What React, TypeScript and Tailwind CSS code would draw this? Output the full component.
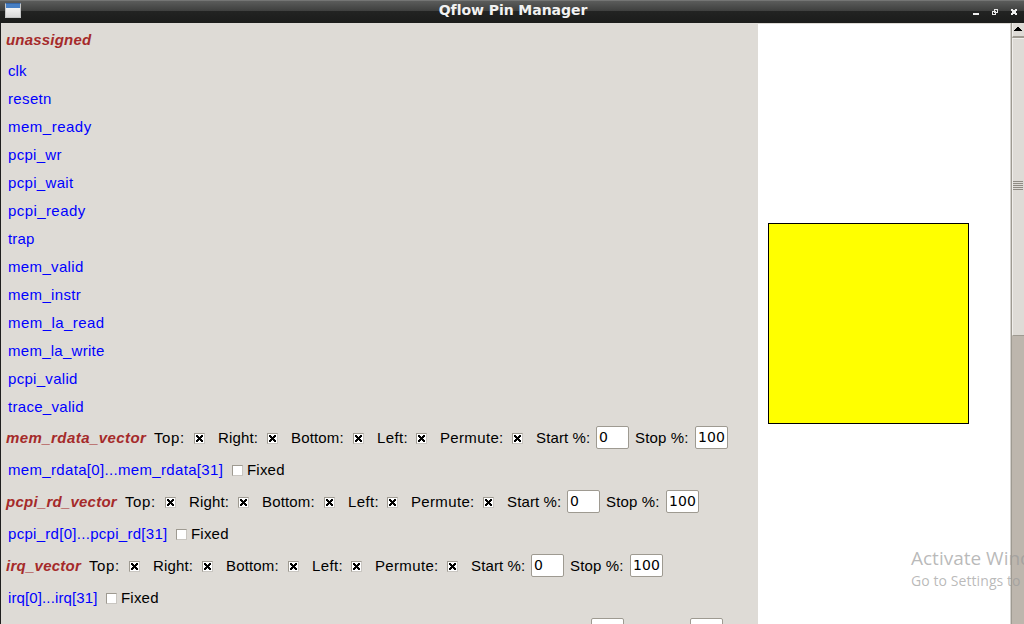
import React from 'react';

const pins = [
  { name: 'clk', tracking: 'tracking-[0.1px]' },
  { name: 'resetn', tracking: 'tracking-[0.35px]' },
  { name: 'mem_ready', tracking: 'tracking-[0.5px]' },
  { name: 'pcpi_wr', tracking: 'tracking-[0.3px]' },
  { name: 'pcpi_wait', tracking: 'tracking-[0.33px]' },
  { name: 'pcpi_ready', tracking: 'tracking-[0.42px]' },
  { name: 'trap', tracking: 'tracking-[0.2px]' },
  { name: 'mem_valid', tracking: 'tracking-[0.35px]' },
  { name: 'mem_instr', tracking: 'tracking-[0.35px]' },
  { name: 'mem_la_read', tracking: 'tracking-[0.45px]' },
  { name: 'mem_la_write', tracking: 'tracking-[0.27px]' },
  { name: 'pcpi_valid', tracking: 'tracking-[0.3px]' },
  { name: 'trace_valid', tracking: 'tracking-[0.3px]' },
];

const vectors = [
  {
    name: 'mem_rdata_vector',
    range: 'mem_rdata[0]...mem_rdata[31]',
    nameClass: 'w-[148px] tracking-[0.43px]',
    rangeClass: 'w-[224px] tracking-[0.33px]',
  },
  {
    name: 'pcpi_rd_vector',
    range: 'pcpi_rd[0]...pcpi_rd[31]',
    nameClass: 'w-[119px] tracking-[0.24px]',
    rangeClass: 'w-[168px] tracking-[0.29px]',
  },
  {
    name: 'irq_vector',
    range: 'irq[0]...irq[31]',
    nameClass: 'w-[83px] tracking-[0.26px]',
    rangeClass: 'w-[98px] tracking-[0.12px]',
  },
];

const sides = [
  { label: 'Top:', className: 'w-[64px] tracking-[0.6px]' },
  { label: 'Right:', className: 'w-[73px] tracking-[0.17px]' },
  { label: 'Bottom:', className: 'w-[86px] tracking-[0.15px]' },
  { label: 'Left:', className: 'w-[63px] tracking-[0.35px]' },
  { label: 'Permute:', className: 'w-[96px] tracking-[0.34px]' },
];

function Check({ on }: { on: boolean }) {
  return (
    <span className="block h-[11px] w-[11px] shrink-0 border border-[#c9c6c1] border-t-[#9e9a91] border-l-[#9e9a91] bg-white">
      {on && (
        <svg viewBox="0 0 9 9" className="block h-[9px] w-[9px]" shapeRendering="crispEdges">
          <path
            d="M1 1h2v1h1v1h1v-1h1v-1h2v2h-1v1h-1v1h1v1h1v2h-2v-1h-1v-1h-1v1h-1v1h-2v-2h1v-1h1v-1h-1v-1h-1z"
            fill="#000"
          />
        </svg>
      )}
    </span>
  );
}

function Entry({ value }: { value?: string }) {
  return (
    <span className="mb-[2px] flex h-[23px] w-[33px] shrink-0 items-center rounded-[2px] border border-[#9e9a91] bg-white pl-[2px] font-['DejaVu_Sans',sans-serif] text-[14px] leading-[20px] tracking-[0.1px] text-black">
      {value}
    </span>
  );
}

function VectorRows({ v }: { v: (typeof vectors)[number] }) {
  return (
    <>
      <div className="flex h-8 shrink-0 items-center pl-[5px]">
        <span className={`${v.nameClass} shrink-0 font-bold italic text-[#a52a2a]`}>{v.name}</span>
        {sides.map((s) => (
          <span key={s.label} className={`${s.className} flex shrink-0 items-center justify-between pr-[13px]`}>
            {s.label}
            <Check on />
          </span>
        ))}
        <span className="w-[60px] shrink-0 tracking-[0.13px]">Start %:</span>
        <Entry value="0" />
        <span className="ml-[6px] w-[60px] shrink-0 tracking-[0.13px]">Stop %:</span>
        <Entry value="100" />
      </div>
      <div className="flex h-8 shrink-0 items-center pl-[7px]">
        <span className={`${v.rangeClass} shrink-0 text-[#0000ff]`}>{v.range}</span>
        <Check on={false} />
        <span className="ml-[4px] tracking-[0.2px]">Fixed</span>
      </div>
    </>
  );
}

function TitleBar() {
  return (
    <header className="grid h-[23px] shrink-0 grid-cols-[1fr_auto_1fr] items-center border-t border-[#747574] bg-[linear-gradient(#5b5c5b_0px,#3e3f3e_10px,#222322_10px,#1b1c1b_22px)] pl-[5px] pr-[6px]">
      <span className="mb-[5px] block h-[15px] w-4 border border-[#c5c6c6] border-t-[#3766a5] bg-[linear-gradient(#477fc4_4px,#f4f4f4_4px,#dadada)]" />
      <h1 className="pb-[5px] pl-[3px] font-['DejaVu_Sans',sans-serif] text-[14px] font-bold leading-[18px] tracking-[-0.05px] text-[#f2f2f2]">
        Qflow Pin Manager
      </h1>
      <svg width="46" height="10" viewBox="0 0 46 10" className="justify-self-end" shapeRendering="crispEdges">
        <path d="M1 5h6v2h-6z" fill="#eee" />
        <path d="M22.5 1.5h3v3h-3zM20.5 3.5h3v3h-3z" fill="none" stroke="#e8e8e8" />
        <path d="M39 1h2v1h2v-1h2v2h-1v2h1v2h-2v-1h-2v1h-2v-2h1v-2h-1z" fill="#eee" />
      </svg>
    </header>
  );
}

export default function App() {
  return (
    <div className="relative flex h-[624px] w-[1024px] flex-col overflow-hidden bg-[#dedbd6] font-['Liberation_Sans',Arial,sans-serif] text-[15px] leading-[20px] text-black">
      <TitleBar />
      <main className="flex min-h-0 flex-1 border-l border-[#1e1e1e]">
        <section className="flex w-[757px] shrink-0 flex-col overflow-hidden">
          <div className="flex h-[34px] shrink-0 items-center pl-[5px] font-bold italic tracking-[0.2px] text-[#a52a2a]">
            unassigned
          </div>
          {pins.map((p) => (
            <div key={p.name} className={`${p.tracking} flex h-7 shrink-0 items-center pl-[7px] text-[#0000ff]`}>
              {p.name}
            </div>
          ))}
          <div className="flex shrink-0 flex-col pt-px">
            {vectors.map((v) => (
              <VectorRows key={v.name} v={v} />
            ))}
            <div className="flex h-8 shrink-0 items-center gap-[66px] pl-[590px]">
              <Entry />
              <Entry />
            </div>
          </div>
        </section>
        <section className="min-w-0 flex-1 border-t border-[#dedbd6] bg-white pl-[10px] pt-[199px]">
          <div className="h-[201px] w-[201px] border border-black bg-[#ffff00]" />
        </section>
        <aside className="flex w-[14px] shrink-0 border-l border-[#d4d2ce]">
          <div className="flex flex-1 flex-col border-l border-[#9e9a91] bg-[#bdb6ad]">
            <div className="flex h-[15px] shrink-0 items-center justify-center border-b-2 border-l border-[#9e9a91] border-l-[#f0eeeb] bg-[#dedbd6] pb-[2px] pr-px">
              <svg width="8" height="4" viewBox="0 0 8 4" shapeRendering="crispEdges">
                <path d="M3 0h2v1h1v1h1v1h1v1H0V3h1V2h1V1h1z" fill="#000" />
              </svg>
            </div>
            <div className="flex h-[298px] shrink-0 flex-col items-center justify-center gap-[1px] border-b border-l border-t border-b-[#9e9a91] border-l-[#f0eeeb] border-t-[#f0eeeb] bg-[#dedbd6] pb-[4px] pr-px">
              {[0, 1, 2, 3, 4].map((i) => (
                <span key={i} className="h-px w-[10px] bg-[#8f8b83]" />
              ))}
            </div>
          </div>
        </aside>
      </main>
      <div className="absolute left-[911px] top-[546px] whitespace-nowrap font-['Open_Sans','Noto_Sans',sans-serif] text-[#9b9b9b]/70">
        <div className="text-[19px] leading-[25px]">Activate Windows</div>
        <div className="text-[14px] leading-[20px] tracking-[0.08px]">Go to Settings to activate Windows.</div>
      </div>
    </div>
  );
}
